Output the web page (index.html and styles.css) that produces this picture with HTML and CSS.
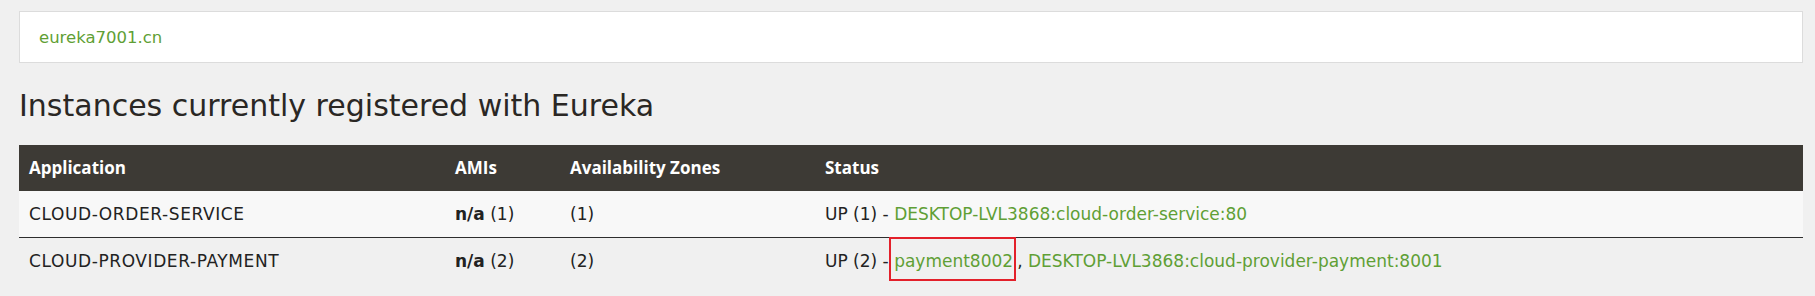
FILE: index.html
```html
<!DOCTYPE html>
<html lang="en">
<head>
<meta charset="utf-8">
<title>Eureka</title>
<link rel="stylesheet" href="styles.css">
</head>
<body>
  <div class="page">
    <div class="host-box"><a class="link" href="#">eureka7001.cn</a></div>
    <h1 class="title">Instances currently registered with Eureka</h1>
    <table class="instances">
      <colgroup>
        <col class="c-app"><col class="c-ami"><col class="c-zone"><col class="c-status">
      </colgroup>
      <thead>
        <tr><th>Application</th><th>AMIs</th><th>Availability Zones</th><th>Status</th></tr>
      </thead>
      <tbody>
        <tr class="odd">
          <td class="app">CLOUD-ORDER-SERVICE</td>
          <td><b class="strong">n/a</b> (1)</td>
          <td>(1)</td>
          <td>UP (1) - <a class="link" href="#">DESKTOP-LVL3868:cloud-order-service:80</a></td>
        </tr>
        <tr>
          <td class="app">CLOUD-PROVIDER-PAYMENT</td>
          <td><b class="strong">n/a</b> (2)</td>
          <td>(2)</td>
          <td>UP (2) - <span class="mark"><a class="link" href="#">payment8002</a></span>, <a class="link" href="#">DESKTOP-LVL3868:cloud-provider-payment:8001</a></td>
        </tr>
      </tbody>
    </table>
  </div>
</body>
</html>
```
FILE: styles.css
```css
html, body {
  margin: 0;
  padding: 0;
  background: #f0f0f0;
}
body {
  font-family: "DejaVu Sans", "Open Sans", sans-serif;
  color: #222222;
  font-size: 17px;
}
.page {
  padding: 11px 12px 0 19px;
}
.host-box {
  background: #ffffff;
  border: 1px solid #dcdcdc;
  height: 50px;
  display: flex;
  align-items: center;
  padding-left: 19px;
  font-size: 16.5px;
}
.link {
  color: #5f9f35;
  text-decoration: none;
}
.title {
  margin: 25px 0 21px 0;
  font-size: 30px;
  line-height: 36px;
  font-weight: 400;
  color: #2a2724;
}
.instances {
  width: 100%;
  border-collapse: collapse;
  table-layout: fixed;
}
.c-app { width: 426px; }
.c-ami { width: 115px; }
.c-zone { width: 255px; }
.instances th,
.instances td {
  text-align: left;
  padding: 10px 10px;
  line-height: 26px;
  white-space: nowrap;
}
.instances th {
  background: #3d3a35;
  color: #ffffff;
  font-family: "Open Sans", "DejaVu Sans", sans-serif;
  font-weight: 700;
  font-size: 17px;
}
.instances td.app {
  letter-spacing: 0.6px;
}
.instances tr.odd td {
  background: #f8f8f8;
  border-bottom: 1px solid #2e2e2e;
}
.strong { font-weight: 700; }
.mark {
  position: relative;
  margin-right: 4px;
}
.mark::after {
  content: "";
  position: absolute;
  left: -5px;
  right: -3px;
  top: -14px;
  bottom: -10px;
  border: 2px solid #e3202a;
}
```
